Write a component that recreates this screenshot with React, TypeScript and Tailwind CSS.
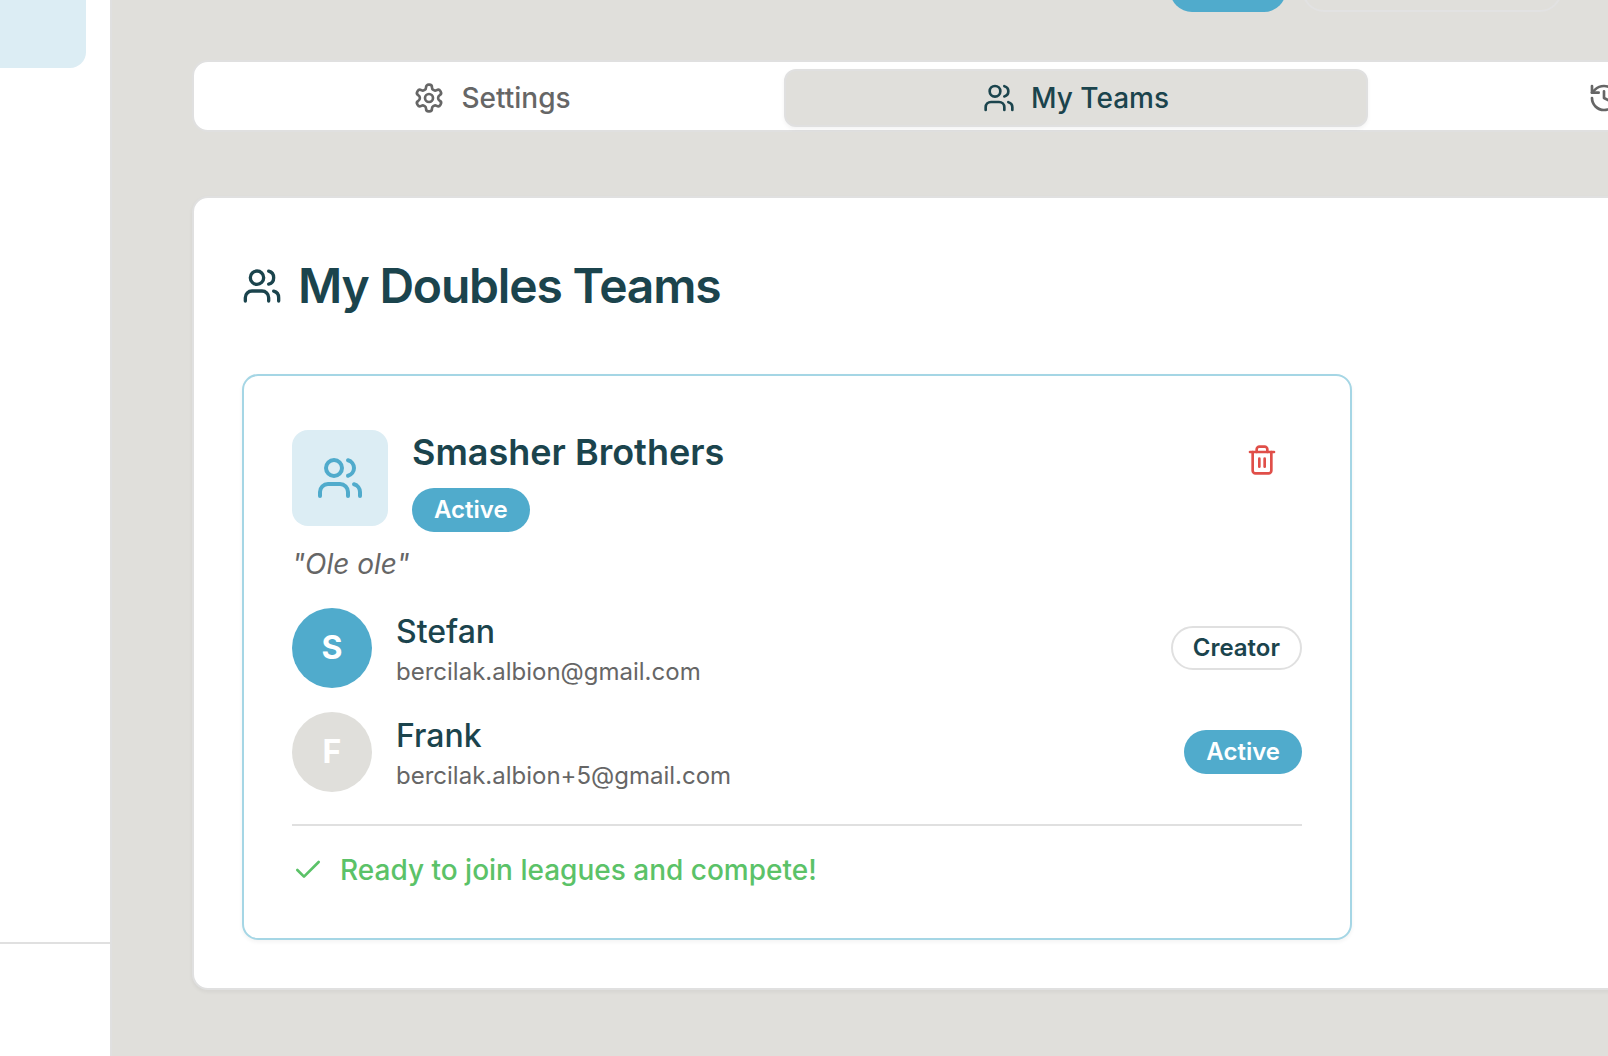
import type { ReactNode } from 'react';
import { Check, History, Users } from 'lucide-react';
import clsx from 'clsx';

interface IconProps {
  size?: number;
}

function StrokeIcon({ size = 24, children }: IconProps & { children: ReactNode }) {
  return (
    <svg
      width={size}
      height={size}
      viewBox="0 0 24 24"
      fill="none"
      stroke="currentColor"
      strokeWidth="2"
      strokeLinecap="round"
      strokeLinejoin="round"
      aria-hidden="true"
    >
      {children}
    </svg>
  );
}

function GearIcon({ size }: IconProps) {
  return (
    <StrokeIcon size={size}>
      <path d="M12.22 2h-.44a2 2 0 0 0-2 2v.18a2 2 0 0 1-1 1.73l-.43.25a2 2 0 0 1-2 0l-.15-.08a2 2 0 0 0-2.73.73l-.22.38a2 2 0 0 0 .73 2.73l.15.1a2 2 0 0 1 1 1.72v.51a2 2 0 0 1-1 1.74l-.15.09a2 2 0 0 0-.73 2.73l.22.38a2 2 0 0 0 2.73.73l.15-.08a2 2 0 0 1 2 0l.43.25a2 2 0 0 1 1 1.73V20a2 2 0 0 0 2 2h.44a2 2 0 0 0 2-2v-.18a2 2 0 0 1 1-1.73l.43-.25a2 2 0 0 1 2 0l.15.08a2 2 0 0 0 2.73-.73l.22-.39a2 2 0 0 0-.73-2.73l-.15-.08a2 2 0 0 1-1-1.74v-.5a2 2 0 0 1 1-1.74l.15-.09a2 2 0 0 0 .73-2.73l-.22-.38a2 2 0 0 0-2.73-.73l-.15.08a2 2 0 0 1-2 0l-.43-.25a2 2 0 0 1-1-1.73V4a2 2 0 0 0-2-2z" />
      <circle cx="12" cy="12" r="3" />
    </StrokeIcon>
  );
}

function BinIcon({ size }: IconProps) {
  return (
    <StrokeIcon size={size}>
      <path d="M3 6h18" />
      <path d="M19 6v14c0 1-1 2-2 2H7c-1 0-2-1-2-2V6" />
      <path d="M8 6V4c0-1 1-2 2-2h4c1 0 2 1 2 2v2" />
      <path d="M10 11v6" />
      <path d="M14 11v6" />
    </StrokeIcon>
  );
}

const tabs = [
  { id: 'settings', label: 'Settings', icon: GearIcon },
  { id: 'teams', label: 'My Teams', icon: Users },
  { id: 'history', label: 'History', icon: History },
];

const members = [
  {
    initial: 'S',
    name: 'Stefan',
    email: 'bercilak.albion@gmail.com',
    status: 'Creator',
    avatarBg: 'bg-[#50abcc]',
  },
  {
    initial: 'F',
    name: 'Frank',
    email: 'bercilak.albion+5@gmail.com',
    status: 'Active',
    avatarBg: 'bg-[#e0dfdb]',
  },
];

function Badge({ label, outline }: { label: string; outline?: boolean }) {
  return (
    <span
      className={clsx(
        'inline-flex h-11 shrink-0 items-center rounded-full border-2 px-5 text-[24px] font-semibold leading-8',
        outline
          ? 'border-[#e0e0e0] text-[#1b444d]'
          : 'border-transparent bg-[#50abcc] text-white'
      )}
    >
      {label}
    </span>
  );
}

function Sidebar() {
  return (
    <aside className="flex w-28 shrink-0 flex-col justify-between border-r-2 border-[#e0e0e0] bg-white">
      <nav className="pr-6">
        <a href="#profile" aria-label="Profile" className="block h-17 rounded-br-2xl bg-[#dcedf4]" />
      </nav>
      <div className="h-[114px] border-t-2 border-[#e0e0e0]" />
    </aside>
  );
}

function TabBar({ active }: { active: string }) {
  return (
    <div
      role="tablist"
      className="mt-12 grid h-18 grid-cols-3 items-center rounded-2xl border-2 border-[#e0e0e0] bg-white px-1.5 pt-1"
    >
      {tabs.map((t) => {
        const Icon = t.icon;
        const selected = t.id === active;
        return (
          <button
            key={t.id}
            type="button"
            role="tab"
            aria-selected={selected}
            className={clsx(
              'flex h-[58px] items-center justify-center gap-4 rounded-xl border-2 text-[28px] font-medium leading-10',
              selected
                ? 'border-[#e0e0e0] bg-[#e0dfdb] text-[#1b444d] shadow-[0_2px_4px_rgba(0,0,0,0.05)]'
                : 'border-transparent text-[#666666]'
            )}
          >
            <Icon size={32} />
            {t.label}
          </button>
        );
      })}
    </div>
  );
}

function TeamCard() {
  return (
    <article className="w-full max-w-[1110px] rounded-2xl border-2 border-[#a5d6e5] bg-white p-12 shadow-[0_2px_4px_rgba(0,0,0,0.05)]">
      <header className="flex items-start justify-between">
        <div className="flex items-center gap-6">
          <div className="flex size-24 items-center justify-center rounded-2xl bg-[#dcedf4] text-[#50abcc]">
            <Users size={48} />
          </div>
          <div className="flex flex-col items-start gap-2">
            <h3 className="text-[36px] font-semibold leading-14 text-[#1b444d]">Smasher Brothers</h3>
            <Badge label="Active" />
          </div>
        </div>
        <button
          type="button"
          aria-label="Delete team"
          className="flex h-18 w-20 items-center justify-center text-[#e04f49]"
        >
          <BinIcon size={32} />
        </button>
      </header>

      <p className="mt-3 text-[28px] italic leading-10 text-[#666666]">"Ole ole"</p>

      {/* Members */}
      <ul className="mt-6 flex flex-col gap-6">
        {members.map((m) => (
          <li key={m.email} className="flex items-center gap-6">
            <div
              className={clsx(
                'flex size-20 shrink-0 items-center justify-center rounded-full text-[32px] font-bold text-white',
                m.avatarBg
              )}
            >
              {m.initial}
            </div>
            <div className="flex-1">
              <div className="text-[32px] font-medium leading-12 text-[#1b444d]">{m.name}</div>
              <div className="text-[24px] leading-8 text-[#666666]">{m.email}</div>
            </div>
            <Badge label={m.status} outline={m.status === 'Creator'} />
          </li>
        ))}
      </ul>

      <div className="mt-8 flex items-center gap-4 border-t-2 border-[#e0e0e0] pt-6 text-[28px] font-medium leading-10 text-[#5bc268]">
        <Check size={32} />
        Ready to join leagues and compete!
      </div>
    </article>
  );
}

export default function App() {
  return (
    <div className="flex min-h-screen bg-[#e0dfdb] font-['Inter',sans-serif]">
      <Sidebar />
      <main className="min-w-0 flex-1 overflow-hidden pl-20">
        <div className="min-w-[1768px]">
          {/* Bottom edge of the profile badges */}
          <div className="flex h-3 items-end gap-4 overflow-hidden pl-[978px]">
            <span className="h-11 w-[116px] shrink-0 rounded-full bg-[#50abcc]" />
            <span className="h-11 w-[260px] shrink-0 rounded-full border-2 border-[#e2e2e2]" />
          </div>

          <TabBar active="teams" />

          <section className="mt-16 rounded-2xl border-2 border-[#e0e0e0] bg-white p-12 shadow-[0_2px_4px_rgba(0,0,0,0.05)]">
            <h2 className="mb-12 flex h-20 items-center gap-4 text-[48px] font-semibold tracking-tight text-[#1b444d]">
              <Users size={40} />
              My Doubles Teams
            </h2>
            <TeamCard />
          </section>
        </div>
      </main>
    </div>
  );
}
